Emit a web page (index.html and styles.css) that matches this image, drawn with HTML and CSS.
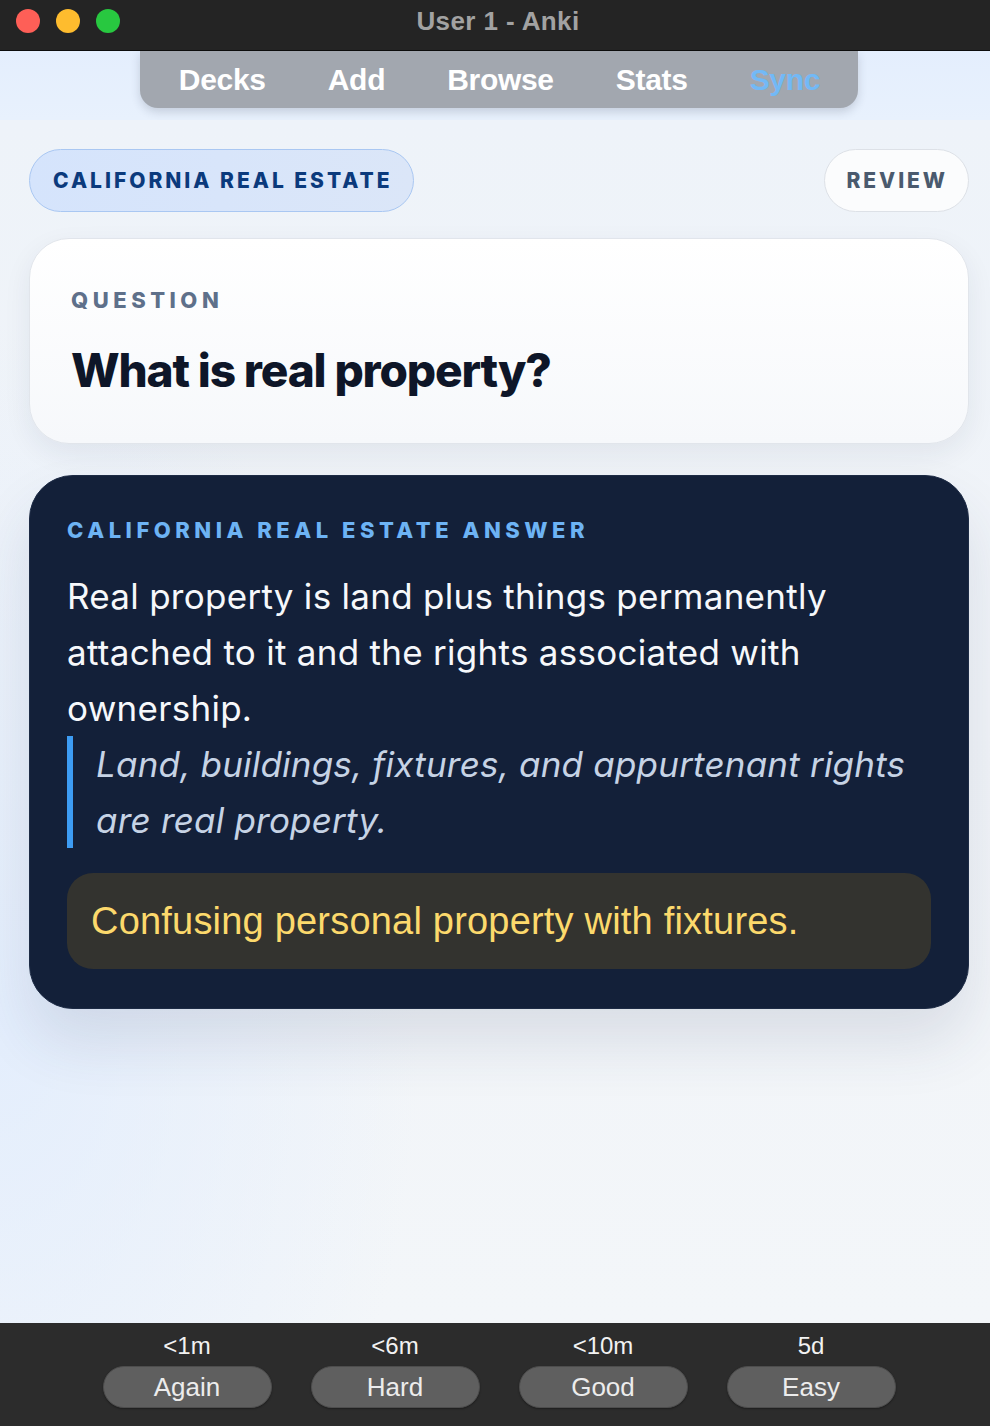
FILE: index.html
```html
<!DOCTYPE html>
<html lang="en">
<head>
<meta charset="utf-8">
<title>User 1 - Anki</title>
<link rel="stylesheet" href="styles.css">
</head>
<body>
<div class="window">
  <header class="titlebar">
    <div class="lights">
      <span class="light red"></span>
      <span class="light yellow"></span>
      <span class="light green"></span>
    </div>
    <div class="title">User 1 - Anki</div>
  </header>

  <div class="toolbar">
    <nav class="nav">
      <span class="nav-item">Decks</span>
      <span class="nav-item">Add</span>
      <span class="nav-item">Browse</span>
      <span class="nav-item">Stats</span>
      <span class="nav-item sync">Sync</span>
    </nav>
  </div>

  <main class="main">
    <div class="header-row">
      <span class="deck-pill">CALIFORNIA REAL ESTATE</span>
      <span class="review-pill">REVIEW</span>
    </div>

    <section class="question-card">
      <div class="label label-question">QUESTION</div>
      <h1 class="question">What is real property?</h1>
    </section>

    <section class="answer-card">
      <div class="label label-answer">CALIFORNIA REAL ESTATE ANSWER</div>
      <p class="answer">Real property is land plus things permanently attached to it and the rights associated with ownership.</p>
      <blockquote class="example">Land, buildings, fixtures, and appurtenant rights are real property.</blockquote>
      <div class="warning">Confusing personal property with fixtures.</div>
    </section>
  </main>

  <footer class="answer-bar">
    <div class="ease">
      <span class="interval">&lt;1m</span>
      <span class="ease-btn">Again</span>
    </div>
    <div class="ease">
      <span class="interval">&lt;6m</span>
      <span class="ease-btn">Hard</span>
    </div>
    <div class="ease">
      <span class="interval">&lt;10m</span>
      <span class="ease-btn">Good</span>
    </div>
    <div class="ease">
      <span class="interval">5d</span>
      <span class="ease-btn">Easy</span>
    </div>
  </footer>
</div>
</body>
</html>
```

FILE: styles.css
```css
* { box-sizing: border-box; }

html, body {
  margin: 0;
  padding: 0;
  height: 100%;
}

body {
  font-family: "Inter", "Liberation Sans", sans-serif;
  background: #232323;
}

.window {
  width: 990px;
  height: 1426px;
  display: flex;
  flex-direction: column;
  overflow: hidden;
}

/* ---------- title bar ---------- */
.titlebar {
  height: 51px;
  flex: none;
  background: #242424;
  border-bottom: 1px solid #0c0c0c;
  display: flex;
  align-items: flex-start;
  position: relative;
}

.lights {
  display: flex;
  gap: 16px;
  padding: 9px 0 0 16px;
}

.light {
  width: 24px;
  height: 24px;
  border-radius: 50%;
  display: block;
}
.light.red { background: #fe5f57; }
.light.yellow { background: #febc2e; }
.light.green { background: #28c840; }

.title {
  position: absolute;
  left: 0;
  right: 0;
  top: 0;
  text-align: center;
  padding-left: 6px;
  font-family: "Liberation Sans", Arial, sans-serif;
  font-weight: 700;
  font-size: 26px;
  letter-spacing: 0.4px;
  line-height: 42px;
  color: #a2a2a2;
}

/* ---------- toolbar ---------- */
.toolbar {
  height: 69px;
  flex: none;
  background: linear-gradient(180deg, #e4eefd 0%, #e8f1fd 100%);
  display: flex;
  justify-content: center;
  align-items: flex-start;
  padding-left: 8px;
}

.nav {
  display: flex;
  gap: 62px;
  padding: 0 38px 0 39px;
  height: 57px;
  background: #a2a7af;
  border-radius: 0 0 18px 18px;
  box-shadow: 0 4px 10px rgba(40, 50, 70, 0.18);
}

.nav-item {
  font-family: "Liberation Sans", Arial, sans-serif;
  font-weight: 700;
  font-size: 30px;
  line-height: 57px;
  color: #ffffff;
  letter-spacing: -0.3px;
}
.nav-item.sync { color: #72b9f6; }

/* ---------- main ---------- */
.main {
  flex: 1;
  padding: 29px 21px 0 29px;
  background:
    radial-gradient(ellipse 420px 700px at 0% 75%, rgba(226, 237, 253, 0.9), rgba(226, 237, 253, 0) 100%),
    linear-gradient(180deg, #eef3f9 0%, #f1f4f8 50%, #f3f6f9 100%);
}

.header-row {
  display: flex;
  justify-content: space-between;
  align-items: center;
  height: 63px;
}

.deck-pill {
  height: 63px;
  display: flex;
  align-items: center;
  padding: 0 21px 0 23px;
  border-radius: 32px;
  background: linear-gradient(90deg, #d5e4fc 0%, #dbe6f8 100%);
  border: 1.5px solid #a9c7f2;
  color: #0b3a7c;
  font-weight: 800;
  font-size: 21px;
  letter-spacing: 0.142em;
}

.review-pill {
  height: 63px;
  display: flex;
  align-items: center;
  padding: 0 20px 0 21px;
  border-radius: 32px;
  background: #fbfcfd;
  border: 1.5px solid #dde1e7;
  color: #4a5a6e;
  font-weight: 800;
  font-size: 21px;
  letter-spacing: 0.14em;
}

.label {
  font-weight: 800;
  font-size: 22px;
  line-height: 28px;
  letter-spacing: 0.205em;
}

/* question card */
.question-card {
  margin-top: 26px;
  height: 206px;
  padding: 47px 40px 0 41px;
  border-radius: 40px;
  background: linear-gradient(180deg, #ffffff 0%, #f6f8fb 100%);
  border: 1px solid #e1e5eb;
  box-shadow: 0 10px 28px rgba(30, 45, 75, 0.07);
}

.label-question { color: #5e708a; }

.question {
  margin: 28px 0 0;
  font-weight: 800;
  font-size: 46px;
  line-height: 56px;
  letter-spacing: -0.025em;
  color: #0e1628;
}

/* answer card */
.answer-card {
  margin-top: 31px;
  padding: 40px 37px 39px 37px;
  border-radius: 44px;
  background: #132039;
  border: 1px solid #1d2b45;
  box-shadow: 0 34px 60px rgba(40, 60, 100, 0.12);
}

.label-answer { color: #6db3f4; }

.answer {
  margin: 24px 0 0;
  font-size: 35px;
  line-height: 56px;
  color: #f6f8fb;
  font-weight: 400;
  letter-spacing: 0.28px;
}

.example {
  margin: 0;
  padding-left: 23px;
  border-left: 6px solid #3d9cf3;
  font-style: italic;
  font-size: 35px;
  line-height: 56px;
  color: #c6d3e5;
  letter-spacing: 0.2px;
}

.warning {
  margin-top: 25px;
  height: 96px;
  display: flex;
  align-items: center;
  padding: 0 24px;
  border-radius: 26px;
  background: #33332f;
  color: #fcd96c;
  font-family: "Liberation Sans", Arial, sans-serif;
  font-size: 38px;
  letter-spacing: 0.2px;
  line-height: 46px;
}

/* ---------- answer bar ---------- */
.answer-bar {
  height: 103px;
  flex: none;
  background: #2c2c2c;
  display: flex;
  justify-content: center;
  gap: 39px;
  padding: 8px 0 0 8px;
  font-family: "Liberation Sans", Arial, sans-serif;
}

.ease {
  width: 169px;
  display: flex;
  flex-direction: column;
  align-items: center;
  gap: 5px;
}

.interval {
  font-size: 24px;
  line-height: 30px;
  color: #f2f2f2;
}

.ease-btn {
  width: 169px;
  height: 42px;
  border-radius: 21px;
  background: #5f5f5f;
  border: 1px solid #4d4d4d;
  box-shadow: 0 1px 2px rgba(0, 0, 0, 0.35);
  text-align: center;
  font-size: 26px;
  line-height: 40px;
  color: #ececec;
}
```
